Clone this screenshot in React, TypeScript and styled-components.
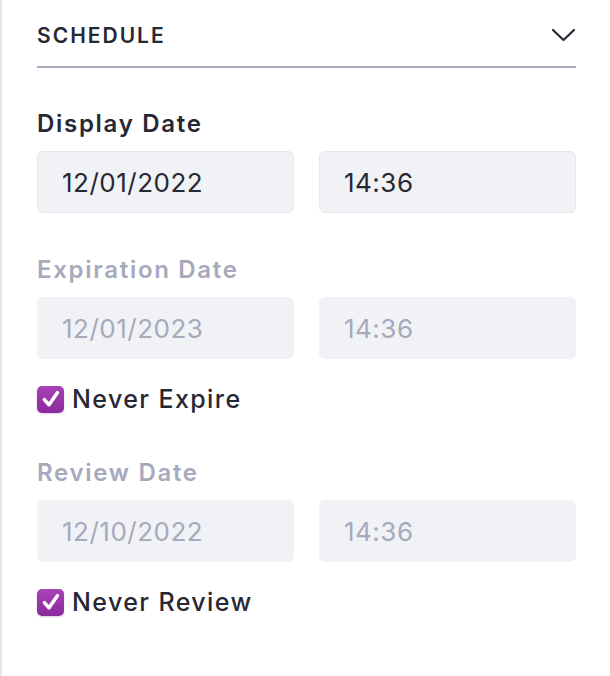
import React from "react";
import styled, { createGlobalStyle } from "styled-components";

const Global = createGlobalStyle`
  html, body { margin: 0; padding: 0; background: #ffffff; }
  body { font-family: Inter, "Noto Sans", "Liberation Sans", sans-serif; }
  * { box-sizing: border-box; }
`;

const Panel = styled.div`
  min-height: 676px;
  border-left: 2px solid #e7e7ed;
  padding: 0 34px 0 35px;
  display: flex;
  flex-direction: column;
`;

const Header = styled.div`
  margin-top: 6px;
  height: 62px;
  display: flex;
  align-items: center;
  justify-content: space-between;
  border-bottom: 2px solid #a7a9bc;
  padding-bottom: 2px;
`;

const HeaderTitle = styled.span`
  font-size: 21px;
  font-weight: 600;
  letter-spacing: 2px;
  color: #272833;
`;

const Section = styled.div<{ $top: number }>`
  margin-top: ${(p) => p.$top}px;
  display: flex;
  flex-direction: column;
`;

const Label = styled.div<{ $disabled?: boolean }>`
  font-size: 24px;
  line-height: 32px;
  font-weight: 600;
  letter-spacing: 1.7px;
  color: ${(p) => (p.$disabled ? "#a7a9bc" : "#272833")};
  margin-bottom: 11px;
`;

const Row = styled.div`
  display: grid;
  grid-template-columns: 1fr 1fr;
  column-gap: 25px;
`;

const Field = styled.div<{ $disabled?: boolean }>`
  height: 62px;
  border-radius: 6px;
  background: #f1f2f5;
  border: 1px solid ${(p) => (p.$disabled ? "#f1f2f5" : "#e7e7ed")};
  display: flex;
  align-items: center;
  padding-left: 24px;
  font-size: 26px;
  letter-spacing: 0.5px;
  color: ${(p) => (p.$disabled ? "#a7a9bc" : "#272833")};
`;

const CheckRow = styled.label`
  margin-top: 26px;
  display: flex;
  align-items: center;
  gap: 8px;
  font-size: 25px;
  line-height: 28px;
  font-weight: 500;
  letter-spacing: 1.4px;
  color: #272833;
`;

const Box = styled.span`
  width: 27px;
  height: 27px;
  border-radius: 5px;
  background: linear-gradient(180deg, #a843b6 0%, #8a2a9c 100%);
  display: inline-flex;
  align-items: center;
  justify-content: center;
  flex-shrink: 0;
  box-shadow: 0 1px 2px rgba(138, 42, 156, 0.25);
`;

const Check = () => (
  <Box>
    <svg width="22" height="22" viewBox="0 0 20 20" fill="none">
      <path d="M4 10.5 L8.2 15.2 L15.8 4.3" stroke="#fff" strokeWidth="3.2" strokeLinecap="round" strokeLinejoin="round" />
    </svg>
  </Box>
);

const Chevron = () => (
  <svg width="25" height="16" viewBox="0 0 25 16" fill="none">
    <path d="M2 3 L12.5 13 L23 3" stroke="#272833" strokeWidth="2.2" strokeLinecap="round" strokeLinejoin="round" />
  </svg>
);

export default function App() {
  return (
    <>
      <Global />
      <Panel>
        <Header>
          <HeaderTitle>SCHEDULE</HeaderTitle>
          <Chevron />
        </Header>
        <Section $top={40}>
          <Label>Display Date</Label>
          <Row>
            <Field>12/01/2022</Field>
            <Field>14:36</Field>
          </Row>
        </Section>
        <Section $top={41}>
          <Label $disabled>Expiration Date</Label>
          <Row>
            <Field $disabled>12/01/2023</Field>
            <Field $disabled>14:36</Field>
          </Row>
          <CheckRow>
            <Check />
            Never Expire
          </CheckRow>
        </Section>
        <Section $top={44}>
          <Label $disabled>Review Date</Label>
          <Row>
            <Field $disabled>12/10/2022</Field>
            <Field $disabled>14:36</Field>
          </Row>
          <CheckRow>
            <Check />
            Never Review
          </CheckRow>
        </Section>
      </Panel>
    </>
  );
}
